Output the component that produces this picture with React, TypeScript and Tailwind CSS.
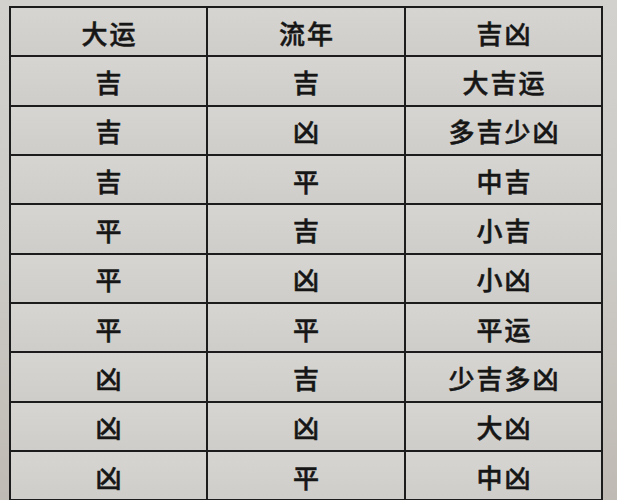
const rows = [
  ["吉", "吉", "大吉运"],
  ["吉", "凶", "多吉少凶"],
  ["吉", "平", "中吉"],
  ["平", "吉", "小吉"],
  ["平", "凶", "小凶"],
  ["平", "平", "平运"],
  ["凶", "吉", "少吉多凶"],
  ["凶", "凶", "大凶"],
  ["凶", "平", "中凶"],
];

const Cell = ({ text }: { text: string }) => (
  <div className="flex items-center justify-center bg-gradient-to-b from-[#d6d5d2] to-[#cecdc9] pl-[2px] pt-[1px] text-[26px] font-medium tracking-[2px] text-[#161616] [-webkit-text-stroke:0.5px_#161616]">
    {text}
  </div>
);

export default function App() {
  return (
    <div
      className="h-[500px] w-[617px] overflow-hidden bg-gradient-to-b from-[#d2d1ce] via-[#cdcbc7] to-[#bfbab3] pl-[9px] pt-[6px]"
      style={{ fontFamily: '"Noto Sans CJK SC", "Noto Sans", sans-serif' }}
    >
      <div className="grid w-[594px] auto-rows-[47.33px] grid-cols-[195px_196px_195px] gap-[2px] bg-[#1c1c1c] p-[2px]">
        <Cell text="大运" />
        <Cell text="流年" />
        <Cell text="吉凶" />
        {rows.flatMap((r, i) => [
          <Cell key={`a${i}`} text={r[0]} />,
          <Cell key={`b${i}`} text={r[1]} />,
          <Cell key={`c${i}`} text={r[2]} />,
        ])}
      </div>
    </div>
  );
}
